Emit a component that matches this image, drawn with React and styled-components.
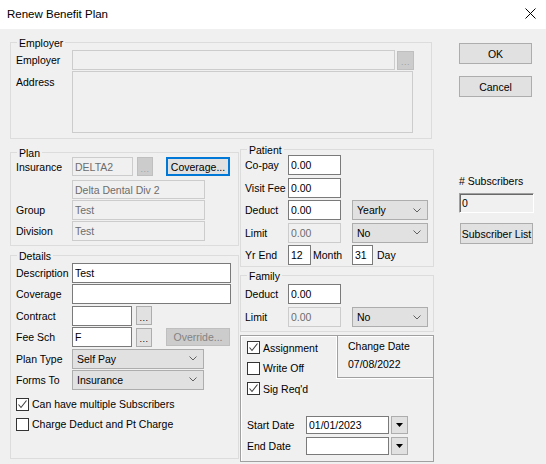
import styled, { createGlobalStyle } from "styled-components";

const GlobalStyle = createGlobalStyle`
  html, body {
    margin: 0;
    padding: 0;
    background: #f0f0f0;
  }
  body {
    font-family: "Liberation Sans", Arial, sans-serif;
    font-size: 10.5px;
    color: #000;
  }
  * {
    box-sizing: border-box;
  }
`;

const Window = styled.div`
  width: 546px;
  height: 464px;
  background: #f0f0f0;
  overflow: hidden;
  display: flex;
  flex-direction: column;
`;

const TitleBar = styled.div`
  height: 29px;
  flex: none;
  background: #fff;
  display: flex;
  align-items: center;
  justify-content: space-between;
  padding: 0 10px 2px 7px;
  font-size: 11.5px;
`;

const Body = styled.div`
  display: flex;
  padding-left: 10px;
`;

const Main = styled.div`
  width: 423px;
  display: flex;
  flex-direction: column;
`;

const Columns = styled.div`
  display: flex;
  gap: 1px;
`;

const Column = styled.div`
  display: flex;
  flex-direction: column;
`;

const GroupBox = styled.div`
  position: relative;
  flex: none;
  width: ${(p) => p.$w}px;
  height: ${(p) => p.$h}px;
  margin-top: ${(p) => p.$mt || 0}px;
  padding: ${(p) => p.$pad || "0"};
  border: 1px solid ${(p) => (p.$etched ? "#a0a0a0" : "#dcdcdc")};
  box-shadow: ${(p) => (p.$etched ? "inset 1px 1px 0 #fff" : "none")};
  display: flex;
  flex-direction: column;
`;

const GroupTitle = styled.span`
  position: absolute;
  top: -6px;
  left: 6px;
  padding: 0 2px;
  line-height: 12px;
  background: #f0f0f0;
`;

const Row = styled.div`
  display: flex;
  align-items: ${(p) => p.$align || "center"};
  height: ${(p) => p.$h || 20}px;
  margin-top: ${(p) => p.$mt || 0}px;
  flex: none;
`;

const Label = styled.span`
  flex: none;
  width: ${(p) => p.$w}px;
  padding-top: ${(p) => p.$pt || 0}px;
  padding-left: ${(p) => p.$pl || 0}px;
  line-height: 12px;
  white-space: nowrap;
`;

const Field = styled.input`
  flex: none;
  width: ${(p) => p.$w}px;
  height: ${(p) => p.$h || 20}px;
  margin-left: ${(p) => p.$ml || 0}px;
  padding: 0 2px;
  font: inherit;
  color: ${(p) => (p.disabled ? "#6d6d6d" : "#000")};
  background: ${(p) => (p.disabled ? "#f0f0f0" : "#fff")};
  border: 1px solid ${(p) => (p.disabled ? "#cccccc" : "#7a7a7a")};
  outline: none;
  &:disabled {
    color: #6d6d6d;
  }
`;

const TextArea = styled.textarea`
  flex: none;
  width: ${(p) => p.$w}px;
  height: ${(p) => p.$h}px;
  padding: 2px;
  font: inherit;
  background: #f0f0f0;
  border: 1px solid #cccccc;
  resize: none;
  outline: none;
`;

const SunkenField = styled.div`
  width: 75px;
  height: 20px;
  margin-top: 6px;
  padding: 1px 2px 0;
  line-height: 16px;
  border: 1px solid;
  border-color: #a0a0a0 #ffffff #ffffff #a0a0a0;
  box-shadow: inset 1px 1px 0 #696969;
  background: #f0f0f0;
`;

const Button = styled.button`
  flex: none;
  width: ${(p) => p.$w}px;
  height: ${(p) => p.$h || 21}px;
  margin-left: ${(p) => p.$ml || 0}px;
  margin-top: ${(p) => p.$mt || 0}px;
  padding: 0;
  font: inherit;
  color: ${(p) => (p.disabled ? "#838383" : "#000")};
  background: ${(p) => (p.disabled ? "#cccccc" : "#e1e1e1")};
  border: ${(p) => (p.$focused ? "2px solid #0078d7" : `1px solid ${p.disabled ? "#bfbfbf" : "#adadad"}`)};
  border-radius: 0;
  display: flex;
  align-items: center;
  justify-content: center;
  white-space: nowrap;
`;

const Dots = styled.span`
  font-size: 9px;
  letter-spacing: 0.5px;
  padding-top: 4px;
  color: ${(p) => (p.$dim ? "#a0a0a0" : "#000")};
`;

const Dropdown = styled.div`
  flex: none;
  width: ${(p) => p.$w}px;
  height: ${(p) => p.$h || 20}px;
  margin-left: ${(p) => p.$ml || 0}px;
  padding: 0 6px 0 4px;
  background: #e1e1e1;
  border: 1px solid #adadad;
  display: flex;
  align-items: center;
  justify-content: space-between;
`;

const CheckRow = styled.label`
  display: flex;
  align-items: center;
  height: 13px;
  margin-top: ${(p) => p.$mt || 0}px;
  flex: none;
  gap: 3px;
  line-height: 12px;
`;

const CheckBox = styled.span`
  width: 13px;
  height: 13px;
  flex: none;
  border: 1px solid #333;
  background: #fff;
  display: flex;
  align-items: center;
  justify-content: center;
`;

const BottomTop = styled.div`
  display: flex;
  justify-content: space-between;
`;

const CheckColumn = styled.div`
  display: flex;
  flex-direction: column;
  padding: 5px 0 0 6px;
`;

const ChangePanel = styled.div`
  width: 96px;
  height: 43px;
  margin-top: -1px;
  padding: 2px 0 0 10px;
  border-left: 1px solid #a0a0a0;
  border-bottom: 1px solid #a0a0a0;
  box-shadow: -1px 1px 0 #fff;
  line-height: 18px;
`;

const DateArea = styled.div`
  margin-top: auto;
  padding: 0 0 6px 6px;
  display: flex;
  flex-direction: column;
`;

const DropButton = styled.div`
  width: 17px;
  height: 18px;
  margin-left: 2px;
  flex: none;
  background: #e1e1e1;
  border: 1px solid #adadad;
  display: flex;
  align-items: center;
  justify-content: center;
`;

const Side = styled.div`
  width: 74px;
  margin-left: 26px;
  display: flex;
  flex-direction: column;
`;

const SideLabel = styled.div`
  margin-top: 78px;
  line-height: 12px;
  white-space: nowrap;
`;

const Chevron = () => (
  <svg width="8" height="5" viewBox="0 0 8 5">
    <path d="M0.5 0.5 L4 4 L7.5 0.5" fill="none" stroke="#606060" strokeWidth="1" />
  </svg>
);

const Check = ({ checked }) => (
  <CheckBox>
    {checked && (
      <svg width="11" height="11" viewBox="0 0 11 11">
        <path d="M1.5 5.5 L4 8.5 L9.5 1.5" fill="none" stroke="#404040" strokeWidth="1.1" />
      </svg>
    )}
  </CheckBox>
);

const Triangle = () => (
  <svg width="7" height="4" viewBox="0 0 7 4">
    <path d="M0 0 H7 L3.5 4 Z" fill="#000" />
  </svg>
);

const CloseIcon = () => (
  <svg width="11" height="11" viewBox="0 0 11 11">
    <path d="M0.5 0.5 L10.5 10.5 M10.5 0.5 L0.5 10.5" stroke="#000" strokeWidth="1" />
  </svg>
);

const Select = ({ w, h, ml, value }) => (
  <Dropdown $w={w} $h={h} $ml={ml}>
    <span>{value}</span>
    <Chevron />
  </Dropdown>
);

const App = () => {
  return (
    <Window>
      <GlobalStyle />
      <TitleBar>
        <span>Renew Benefit Plan</span>
        <CloseIcon />
      </TitleBar>
      <Body>
        <Main>
          <GroupBox $w={422} $h={97} $mt={13} $pad="7px 0 0 5px">
            <GroupTitle>Employer</GroupTitle>
            <Row $h={20}>
              <Label $w={56}>Employer</Label>
              <Field $w={323} disabled readOnly />
              <Button $w={17} $h={19} $ml={2} disabled>
                <Dots $dim>...</Dots>
              </Button>
            </Row>
            <Row $h={62} $mt={1} $align="flex-start">
              <Label $w={56} $pt={5}>Address</Label>
              <TextArea $w={341} $h={62} disabled readOnly />
            </Row>
          </GroupBox>

          <Columns>
            <Column>
              <GroupBox $w={229} $h={94} $mt={13} $pad="4px 0 0 5px">
                <GroupTitle>Plan</GroupTitle>
                <Row $h={19}>
                  <Label $w={56}>Insurance</Label>
                  <Field $w={61} $h={19} disabled readOnly value="DELTA2" />
                  <Button $w={16} $h={19} $ml={4} disabled>
                    <Dots $dim>...</Dots>
                  </Button>
                  <Button $w={64} $h={19} $ml={13} $focused>
                    Coverage...
                  </Button>
                </Row>
                <Row $h={19} $mt={4}>
                  <Label $w={56} />
                  <Field $w={133} $h={19} disabled readOnly value="Delta Dental Div 2" />
                </Row>
                <Row $mt={1}>
                  <Label $w={56}>Group</Label>
                  <Field $w={133} disabled readOnly value="Test" />
                </Row>
                <Row $mt={1}>
                  <Label $w={56}>Division</Label>
                  <Field $w={133} disabled readOnly value="Test" />
                </Row>
              </GroupBox>

              <GroupBox $w={229} $h={204} $mt={9} $pad="7px 0 0 5px">
                <GroupTitle>Details</GroupTitle>
                <Row>
                  <Label $w={56}>Description</Label>
                  <Field $w={159} readOnly value="Test" />
                </Row>
                <Row $mt={1.4}>
                  <Label $w={56}>Coverage</Label>
                  <Field $w={159} readOnly value="" />
                </Row>
                <Row $mt={1.4}>
                  <Label $w={56}>Contract</Label>
                  <Field $w={60} readOnly value="" />
                  <Button $w={16} $h={19} $ml={4}>
                    <Dots>...</Dots>
                  </Button>
                </Row>
                <Row $mt={1.4}>
                  <Label $w={56}>Fee Sch</Label>
                  <Field $w={60} readOnly value="F" />
                  <Button $w={16} $h={19} $ml={4}>
                    <Dots>...</Dots>
                  </Button>
                  <Button $w={64} $h={18} $ml={14} disabled>
                    Override...
                  </Button>
                </Row>
                <Row $mt={1.4}>
                  <Label $w={56}>Plan Type</Label>
                  <Select w={132} value="Self Pay" />
                </Row>
                <Row $mt={1.4}>
                  <Label $w={56}>Forms To</Label>
                  <Select w={132} value="Insurance" />
                </Row>
                <CheckRow $mt={8}>
                  <Check checked />
                  <span>Can have multiple Subscribers</span>
                </CheckRow>
                <CheckRow $mt={7}>
                  <Check />
                  <span>Charge Deduct and Pt Charge</span>
                </CheckRow>
              </GroupBox>
            </Column>

            <Column>
              <GroupBox $w={194} $h={118} $mt={10} $pad="5px 0 0 4px">
                <GroupTitle>Patient</GroupTitle>
                <Row>
                  <Label $w={43}>Co-pay</Label>
                  <Field $w={53} readOnly value="0.00" />
                </Row>
                <Row $mt={2.5}>
                  <Label $w={43}>Visit Fee</Label>
                  <Field $w={53} readOnly value="0.00" />
                </Row>
                <Row $mt={2.5}>
                  <Label $w={43}>Deduct</Label>
                  <Field $w={53} readOnly value="0.00" />
                  <Select w={76} ml={11} value="Yearly" />
                </Row>
                <Row $mt={2.5}>
                  <Label $w={43}>Limit</Label>
                  <Field $w={53} disabled readOnly value="0.00" />
                  <Select w={76} ml={11} value="No" />
                </Row>
                <Row $mt={2.5}>
                  <Label $w={43}>Yr End</Label>
                  <Field $w={23} readOnly value="12" />
                  <Label $w={41} $pl={2}>Month</Label>
                  <Field $w={21} readOnly value="31" />
                  <Label $w={30} $pl={4}>Day</Label>
                </Row>
              </GroupBox>

              <GroupBox $w={194} $h={57} $mt={8} $pad="8px 0 0 4px">
                <GroupTitle>Family</GroupTitle>
                <Row>
                  <Label $w={43}>Deduct</Label>
                  <Field $w={53} readOnly value="0.00" />
                </Row>
                <Row $mt={3}>
                  <Label $w={43}>Limit</Label>
                  <Field $w={53} disabled readOnly value="0.00" />
                  <Select w={76} ml={11} value="No" />
                </Row>
              </GroupBox>

              <GroupBox $w={194} $h={127} $mt={3} $etched>
                <BottomTop>
                  <CheckColumn>
                    <CheckRow>
                      <Check checked />
                      <span>Assignment</span>
                    </CheckRow>
                    <CheckRow $mt={7.5}>
                      <Check />
                      <span>Write Off</span>
                    </CheckRow>
                    <CheckRow $mt={7.5}>
                      <Check checked />
                      <span>Sig Req'd</span>
                    </CheckRow>
                  </CheckColumn>
                  <ChangePanel>
                    <div>Change Date</div>
                    <div>07/08/2022</div>
                  </ChangePanel>
                </BottomTop>
                <DateArea>
                  <Row $h={18}>
                    <Label $w={59}>Start Date</Label>
                    <Field $w={83} $h={18} readOnly value="01/01/2023" />
                    <DropButton>
                      <Triangle />
                    </DropButton>
                  </Row>
                  <Row $h={18} $mt={3}>
                    <Label $w={59}>End Date</Label>
                    <Field $w={83} $h={18} readOnly value="" />
                    <DropButton>
                      <Triangle />
                    </DropButton>
                  </Row>
                </DateArea>
              </GroupBox>
            </Column>
          </Columns>
        </Main>

        <Side>
          <Button $w={73} $mt={14}>OK</Button>
          <Button $w={73} $mt={12}>Cancel</Button>
          <SideLabel># Subscribers</SideLabel>
          <SunkenField>0</SunkenField>
          <Button $w={73} $mt={10} $ml={1}>Subscriber List</Button>
        </Side>
      </Body>
    </Window>
  );
};

export default App;
